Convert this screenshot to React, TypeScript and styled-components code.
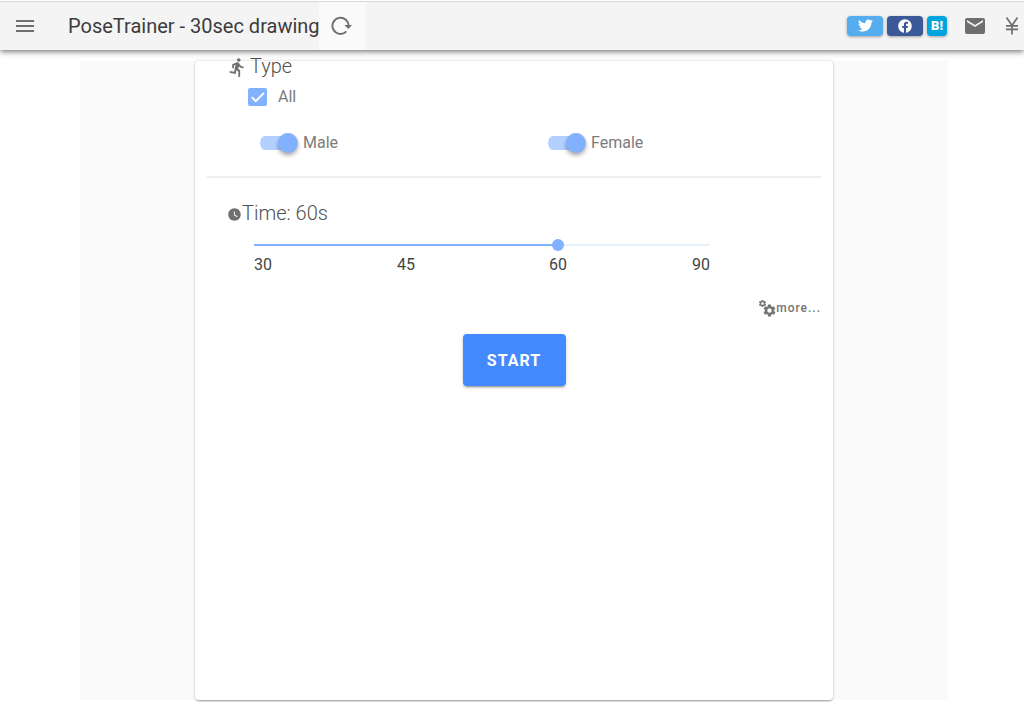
import React, { useState } from 'react';
import styled, { createGlobalStyle } from 'styled-components';
import { MdDirectionsRun, MdWatchLater, MdEmail, MdSettings } from 'react-icons/md';
import { FaTwitter, FaFacebook } from 'react-icons/fa';

const GlobalStyle = createGlobalStyle`
  *, *::before, *::after { box-sizing: border-box; }
  body {
    margin: 0;
    background: #fff;
    color: #333;
    font-family: Roboto, sans-serif;
    font-size: 16px;
  }
  button { font-family: inherit; border: 0; padding: 0; background: none; cursor: pointer; }
  svg { display: block; }
`;

const Header = styled.header`
  position: relative;
  display: flex;
  align-items: center;
  height: 50px;
  padding: 0 0 0 16px;
  background: #f4f4f4;
  border-top: 1px solid #fff;
  box-shadow: inset 0 1px 0 #d8dada, 0 2px 4px -1px rgba(0, 0, 0, 0.4),
    0 4px 5px rgba(0, 0, 0, 0.14), 0 1px 10px rgba(0, 0, 0, 0.08);
`;

const IconButton = styled.button`
  color: #6f6f6f;
`;

const Title = styled.h1`
  margin: 0 0 0 34px;
  font-size: 20px;
  font-weight: 400;
  line-height: 24px;
  white-space: nowrap;
  color: #3c3c3c;
`;

const ReloadButton = styled(IconButton)`
  display: grid;
  place-items: center;
  align-self: stretch;
  width: 47px;
  margin-top: 1px;
  margin-left: -1px;
  background: #fafafa;
`;

const Actions = styled.nav`
  display: flex;
  align-items: center;
  gap: 4px;
  margin-left: auto;
  padding-right: 5px;
`;

const ShareLink = styled.a<{ $color: string; $width: number }>`
  display: grid;
  place-items: center;
  width: ${(p) => p.$width}px;
  height: 20px;
  border-radius: 4px;
  background: ${(p) => p.$color};
  color: #fff;
  font-size: 13px;
  font-weight: 900;
  line-height: 20px;
  text-decoration: none;
  box-shadow: 0 1px 3px rgba(0, 0, 0, 0.35);
`;

const ActionLink = styled.a`
  margin-left: 12px;
  color: #6f6f6f;

  & + & { margin-left: 14px; }
`;

const Page = styled.main`
  margin: 11px 76px 24px 80px;
  background: #fafafa;
`;

const Card = styled.form`
  max-width: 638px;
  min-height: 639px;
  margin: 0 auto;
  padding: 1px 12px;
  background: #fff;
  border-radius: 4px;
  box-shadow: 0 2px 2px -1px rgba(0, 0, 0, 0.35), 0 0 3px rgba(0, 0, 0, 0.2);
`;

const Section = styled.section`
  padding: 0 0 0 20px;
`;

const TypeSection = styled(Section)`
  margin-top: -8px;
  padding-bottom: 21px;
  border-bottom: 2px solid #eee;
`;

const Heading = styled.h2<{ $gap: number }>`
  display: flex;
  align-items: center;
  gap: ${(p) => p.$gap}px;
  margin: 0;
  font-size: 20px;
  font-weight: 300;
  line-height: 24px;
  color: #505050;

  svg { color: #6f6f6f; margin-top: 3px; }
`;

const CheckLabel = styled.label`
  display: flex;
  align-items: center;
  gap: 11px;
  width: max-content;
  margin: 7px 0 0 21px;
  line-height: 24px;
  color: #7c7c7c;
`;

const Checkbox = styled.input`
  appearance: none;
  width: 19px;
  height: 18px;
  margin: 0;
  border: 2px solid #82b1ff;
  border-radius: 2px;

  &:checked {
    background: #82b1ff
      url("data:image/svg+xml,%3Csvg xmlns='http://www.w3.org/2000/svg' viewBox='0 0 18 18'%3E%3Cpath d='M3.2 9.2l3.9 3.9 8-8.2' fill='none' stroke='white' stroke-width='1.9'/%3E%3C/svg%3E")
      center / 18px 18px no-repeat;
  }
`;

const Switches = styled.div`
  display: grid;
  grid-template-columns: 1fr 1fr;
  column-gap: 15px;
  margin: 22px 0 0 33px;
`;

const SwitchLabel = styled.label`
  display: flex;
  align-items: center;
  gap: 5px;
  line-height: 24px;
  color: #7c7c7c;
`;

const SwitchInput = styled.input`
  appearance: none;
  display: flex;
  align-items: center;
  width: 38px;
  height: 20px;
  margin: 0;
  background: linear-gradient(#bbb, #bbb) 0 3px / 34px 14px no-repeat;
  border-radius: 10px;

  &::before {
    content: '';
    width: 20px;
    height: 20px;
    border-radius: 50%;
    background: #fafafa;
    box-shadow: 0 2px 4px -1px rgba(0, 0, 0, 0.25), 0 3px 5px rgba(0, 0, 0, 0.2);
  }
  &:checked {
    justify-content: flex-end;
    background: radial-gradient(circle at 7px 7px, #b4d0ff 7px, transparent 8px) 0 3px / 8px 14px no-repeat,
      linear-gradient(#b4d0ff, #b4d0ff) 7px 3px / 24px 14px no-repeat;
  }
  &:checked::before { background: #82b1ff; }
`;

const TimeSection = styled(Section)`
  padding-top: 23px;
`;

const SliderArea = styled.div`
  margin: 14px 111px 0 27px;
`;

const Slider = styled.input`
  appearance: none;
  display: block;
  width: calc(100% + 12px);
  height: 12px;
  margin: 0 -6px;
  background: linear-gradient(to right, #82b1ff var(--fill), #e3f2fd var(--fill))
    6px 5px / calc(100% - 12px) 2px no-repeat;

  &::-webkit-slider-thumb {
    appearance: none;
    width: 12px;
    height: 12px;
    border-radius: 50%;
    background: #82b1ff;
  }
`;

const Ticks = styled.div`
  display: grid;
  grid-template-columns: 1fr 2fr 2fr 1fr;
  margin-top: 4px;
  line-height: 20px;
  text-align: center;
  color: #444;

  span:first-child { text-align: left; }
  span:last-child { text-align: right; }
`;

const MoreButton = styled.button`
  display: flex;
  align-items: center;
  margin: 23px 0 0 auto;
  font-size: 12px;
  font-weight: 500;
  line-height: 20px;
  letter-spacing: 1px;
  color: #757575;
`;

const StartButton = styled.button`
  display: block;
  width: 103px;
  height: 52px;
  margin: 16px auto 0;
  border-radius: 4px;
  background: #448aff;
  color: #fff;
  font-size: 16px;
  font-weight: 700;
  letter-spacing: 1px;
  box-shadow: 0 3px 1px -2px rgba(0, 0, 0, 0.2), 0 2px 2px rgba(0, 0, 0, 0.14),
    0 1px 5px rgba(0, 0, 0, 0.12);
`;

const MenuIcon = () => (
  <svg width="18" height="14" viewBox="0 0 18 14" fill="none" stroke="currentColor" strokeWidth="2">
    <path d="M0 2h18M0 7h18M0 12h18" />
  </svg>
);

const ReloadIcon = () => (
  <svg width="22" height="20" viewBox="0 0 22 20" fill="none" stroke="currentColor" strokeWidth="1.9">
    <path d="M15.4 15.4A8.1 8.1 0 1 1 17.6 10.5" />
    <path d="M13.500 9h7.500l-3.700 4z" fill="currentColor" stroke="none" />
  </svg>
);

const YenIcon = () => (
  <svg width="14" height="18" viewBox="0 0 14 18" fill="none" stroke="currentColor" strokeWidth="1.7">
    <path d="M1.5 0.5L7 8.5L12.5 0.5M7 8.5V17.5M1 8.8H13M1 12.3H13" />
  </svg>
);

const GearsIcon = () => (
  <svg width="18" height="19" viewBox="0 0 18 19">
    <MdSettings x="0" y="0" size={9} />
    <MdSettings x="4" y="4" size={15} />
  </svg>
);

const times = [30, 45, 60, 90];

export default function App() {
  const [types, setTypes] = useState({ Male: true, Female: true });
  const [step, setStep] = useState(2);
  const all = types.Male && types.Female;
  const fill = { '--fill': `${(step / 3) * 100}%` } as React.CSSProperties;

  return (
    <>
      <GlobalStyle />
      <Header>
        <IconButton type="button" aria-label="Menu"><MenuIcon /></IconButton>
        <Title>PoseTrainer - 30sec drawing</Title>
        <ReloadButton type="button" aria-label="Reload"><ReloadIcon /></ReloadButton>
        <Actions>
          <ShareLink href="#twitter" aria-label="Twitter" $color="#55acee" $width={36}><FaTwitter size={15} /></ShareLink>
          <ShareLink href="#facebook" aria-label="Facebook" $color="#3b5998" $width={36}><FaFacebook size={14} /></ShareLink>
          <ShareLink href="#hatena" $color="#00a4de" $width={20}>B!</ShareLink>
          <ActionLink href="#mail" aria-label="Mail"><MdEmail size={24} /></ActionLink>
          <ActionLink href="#donate" aria-label="Donate"><YenIcon /></ActionLink>
        </Actions>
      </Header>
      <Page>
        <Card onSubmit={(e) => e.preventDefault()}>
          <TypeSection>
            <Heading $gap={2}><MdDirectionsRun size={21} />Type</Heading>
            <CheckLabel>
              <Checkbox
                type="checkbox"
                checked={all}
                onChange={() => setTypes({ Male: !all, Female: !all })}
              />
              All
            </CheckLabel>
            <Switches>
              {(['Male', 'Female'] as const).map((name) => (
                <SwitchLabel key={name}>
                  <SwitchInput
                    type="checkbox"
                    role="switch"
                    checked={types[name]}
                    onChange={() => setTypes({ ...types, [name]: !types[name] })}
                  />
                  {name}
                </SwitchLabel>
              ))}
            </Switches>
          </TypeSection>
          <TimeSection>
            <Heading $gap={0}><MdWatchLater size={15} />Time: {times[step]}s</Heading>
            <SliderArea>
              <Slider
                type="range"
                aria-label="Time"
                min={0}
                max={3}
                value={step}
                style={fill}
                onChange={(e) => setStep(Number(e.target.value))}
              />
              <Ticks>{times.map((t) => <span key={t}>{t}</span>)}</Ticks>
            </SliderArea>
          </TimeSection>
          <MoreButton type="button"><GearsIcon />more...</MoreButton>
          <StartButton type="submit">START</StartButton>
        </Card>
      </Page>
    </>
  );
}
